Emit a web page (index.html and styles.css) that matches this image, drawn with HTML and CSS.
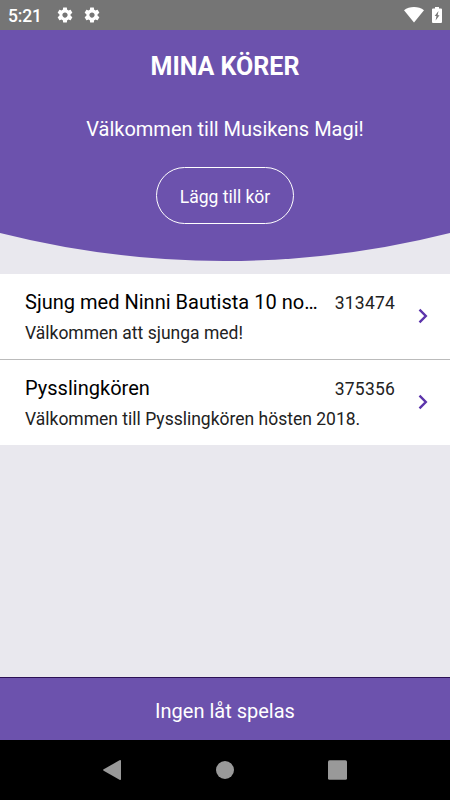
FILE: index.html
```html
<!DOCTYPE html>
<html lang="sv">
<head>
<meta charset="utf-8">
<title>Mina körer</title>
<link rel="stylesheet" href="styles.css">
</head>
<body>
<div class="screen">
  <div class="status-bar">
    <span class="clock">5:21</span>
    <svg class="gear" viewBox="0 0 24 24"><path d="M19.43 12.98c.04-.32.07-.64.07-.98s-.03-.66-.07-.98l2.11-1.65c.19-.15.24-.42.12-.64l-2-3.46c-.12-.22-.39-.3-.61-.22l-2.49 1c-.52-.4-1.08-.73-1.69-.98l-.38-2.65C14.46 2.18 14.25 2 14 2h-4c-.25 0-.46.18-.49.42l-.38 2.65c-.61.25-1.17.59-1.69.98l-2.49-1c-.23-.09-.49 0-.61.22l-2 3.46c-.13.22-.07.49.12.64l2.11 1.65c-.04.32-.07.65-.07.98s.03.66.07.98l-2.11 1.65c-.19.15-.24.42-.12.64l2 3.46c.12.22.39.3.61.22l2.49-1c.52.4 1.08.73 1.69.98l.38 2.65c.03.24.24.42.49.42h4c.25 0 .46-.18.49-.42l.38-2.65c.61-.25 1.17-.59 1.69-.98l2.49 1c.23.09.49 0 .61-.22l2-3.46c.12-.22.07-.49-.12-.64l-2.11-1.65zM12 15.5c-1.93 0-3.5-1.57-3.5-3.5s1.57-3.5 3.5-3.5 3.5 1.57 3.5 3.5-1.57 3.5-3.5 3.5z"/></svg>
    <svg class="gear" viewBox="0 0 24 24"><path d="M19.43 12.98c.04-.32.07-.64.07-.98s-.03-.66-.07-.98l2.11-1.65c.19-.15.24-.42.12-.64l-2-3.46c-.12-.22-.39-.3-.61-.22l-2.49 1c-.52-.4-1.08-.73-1.69-.98l-.38-2.65C14.46 2.18 14.25 2 14 2h-4c-.25 0-.46.18-.49.42l-.38 2.65c-.61.25-1.17.59-1.69.98l-2.49-1c-.23-.09-.49 0-.61.22l-2 3.46c-.13.22-.07.49.12.64l2.11 1.65c-.04.32-.07.65-.07.98s.03.66.07.98l-2.11 1.65c-.19.15-.24.42-.12.64l2 3.46c.12.22.39.3.61.22l2.49-1c.52.4 1.08.73 1.69.98l.38 2.65c.03.24.24.42.49.42h4c.25 0 .46-.18.49-.42l.38-2.65c.61-.25 1.17-.59 1.69-.98l2.49 1c.23.09.49 0 .61-.22l2-3.46c.12-.22.07-.49-.12-.64l-2.11-1.65zM12 15.5c-1.93 0-3.5-1.57-3.5-3.5s1.57-3.5 3.5-3.5 3.5 1.57 3.5 3.5-1.57 3.5-3.5 3.5z"/></svg>
    <svg class="wifi" viewBox="0 0 20 16"><path d="M0 3.300C2.800 1.100 6.200 0 10 0s7.200 1.100 10 3.300L10 15.500z"/></svg>
    <svg class="battery" viewBox="0 0 10 16"><path fill-rule="evenodd" d="M3 0h4v1.600h2q1 0 1 1V15q0 1-1 1H1q-1 0-1-1V2.600q0-1 1-1h2zM6.500 4L2.700 9h1.800L3.600 13.500 7.500 8.300H5.600z"/></svg>
  </div>
  <header class="header">
    <h1 class="title">MINA KÖRER</h1>
    <p class="welcome">Välkommen till Musikens Magi!</p>
    <button class="add-button" type="button">Lägg till kör</button>
  </header>
  <svg class="curve" viewBox="0 0 450 28"><path d="M0 0H450A918 918 0 0 1 0 0z"/></svg>
  <main class="choirs">
    <div class="choir">
      <div class="choir-text">
        <div class="choir-top"><span class="name">Sjung med Ninni Bautista 10 no…</span><span class="code">313474</span></div>
        <p class="description">Välkommen att sjunga med!</p>
      </div>
      <svg class="chevron" viewBox="0 0 10 16"><path d="M1.500 1.700l6.300 6.300-6.300 6.300"/></svg>
    </div>
    <div class="choir">
      <div class="choir-text">
        <div class="choir-top"><span class="name">Pysslingkören</span><span class="code">375356</span></div>
        <p class="description">Välkommen till Pysslingkören hösten 2018.</p>
      </div>
      <svg class="chevron" viewBox="0 0 10 16"><path d="M1.500 1.700l6.300 6.300-6.300 6.300"/></svg>
    </div>
  </main>
  <footer class="player">Ingen låt spelas</footer>
  <nav class="nav-bar">
    <svg class="nav-icon" viewBox="0 0 22 22"><path d="M18.500 1.300Q20 .5 20 2v18q0 1.500-1.500.7L2.700 11.700q-1.200-.7 0-1.400z"/></svg>
    <svg class="nav-icon" viewBox="0 0 22 22"><circle cx="11" cy="11" r="9"/></svg>
    <svg class="nav-icon" viewBox="0 0 22 22"><rect x="1" y="1.300" width="19" height="19.400" rx="1.500"/></svg>
  </nav>
</div>
</body>
</html>
```
FILE: styles.css
```css
* { box-sizing: border-box; }
body { margin: 0; font-family: Roboto, sans-serif; }
h1, p { margin: 0; }
.screen {
  display: flex;
  flex-direction: column;
  width: 450px;
  height: 800px;
  overflow: hidden;
  background: #e9e8ee;
}
.status-bar {
  display: flex;
  align-items: center;
  height: 30px;
  padding: 0 8px;
  background: #757575;
  color: #fff;
  fill: #fff;
}
.clock { width: 47.500px; font-size: 17.500px; font-weight: 500; line-height: 30px; letter-spacing: -.2px; padding-top: 1px; }
.gear { width: 18px; height: 18px; margin-right: 9.500px; }
.wifi { width: 20px; height: 16px; margin-left: auto; }
.battery { width: 10px; height: 16px; margin-left: 8px; }
.header {
  display: flex;
  flex-direction: column;
  align-items: center;
  height: 203px;
  padding-top: 21px;
  background: #6c52ad;
  color: #fff;
}
.title { font-size: 25px; line-height: 32px; font-weight: 700; }
.welcome { margin-top: 33px; font-size: 20px; line-height: 26px; }
.add-button {
  width: 138px;
  height: 57px;
  margin-top: 25px;
  padding: 3px 0 0;
  border: 1px solid #fff;
  border-radius: 28.500px;
  background: transparent;
  color: #fff;
  font: 400 17.5px/24px Roboto, sans-serif;
}
.curve { display: block; flex: none; width: 450px; height: 28px; fill: #6c52ad; }
.choirs { margin-top: 13px; background: #fff; }
.choir {
  display: flex;
  align-items: flex-start;
  height: 85px;
  padding: 13px 22px 0 25px;
}
.choir + .choir { height: 86px; border-top: 1px solid #bbb; }
.choir-text { width: 370px; }
.choir-top { display: flex; align-items: center; justify-content: space-between; height: 30px; }
.name {
  white-space: nowrap;
  font-size: 20.050px;
  line-height: 30px;
  color: #000;
}
.code { font-size: 17.500px; line-height: 30px; padding-top: 1px; letter-spacing: .2px; color: #222; }
.description { font-size: 17.500px; line-height: 32px; color: #222; }
.chevron {
  width: 10px;
  height: 16px;
  margin: 21px 0 0 auto;
  fill: none;
  stroke: #5c34ab;
  stroke-width: 2.400;
}
.player {
  height: 63px;
  margin-top: auto;
  padding-top: 3px;
  border-top: 1px solid #2b1055;
  background: #6c52ad;
  color: #fff;
  font-size: 20px;
  line-height: 60px;
  text-align: center;
}
.nav-bar {
  display: flex;
  align-items: center;
  justify-content: center;
  gap: 91px;
  height: 60px;
  background: #000;
  fill: #999;
}
.nav-icon { width: 22px; height: 22px; }
```
